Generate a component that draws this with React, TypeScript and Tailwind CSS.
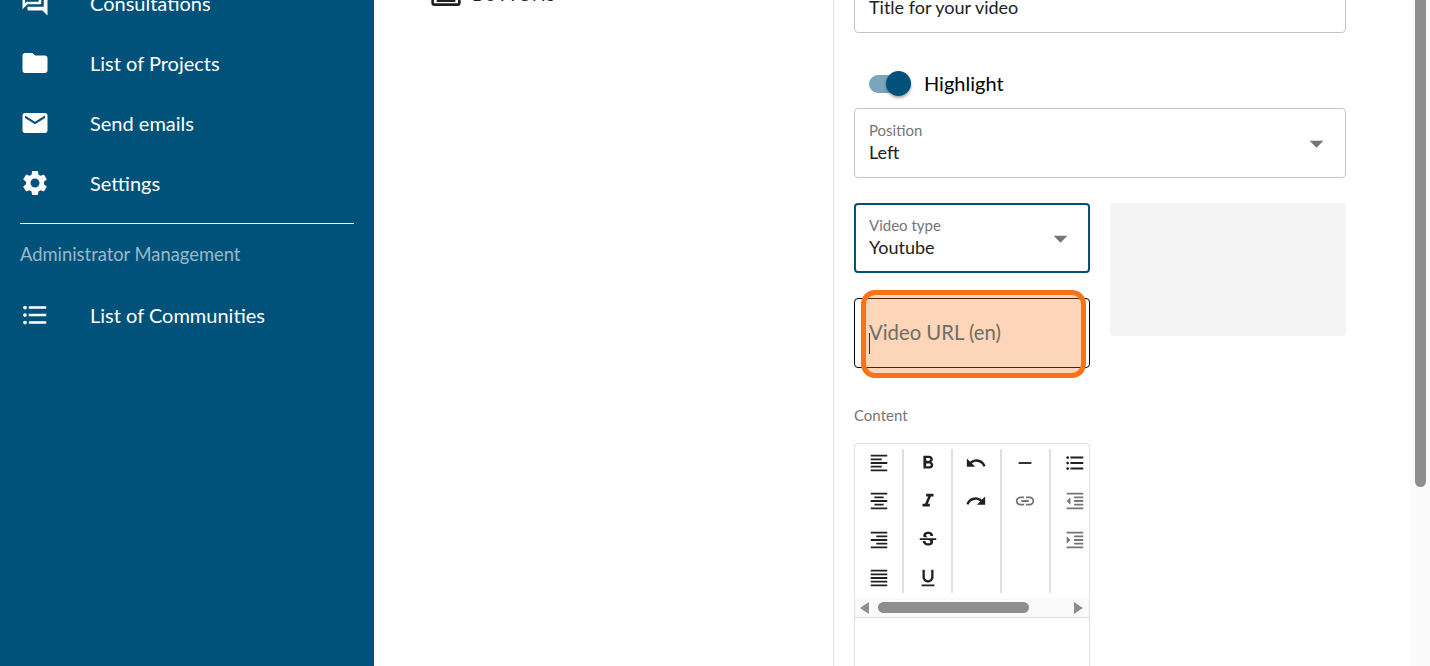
const ICONS = {
	forum: "M15 4v7H5.17L4 12.17V4h11m1-2H3c-.55 0-1 .45-1 1v14l4-4h10c.55 0 1-.45 1-1V3c0-.55-.45-1-1-1zm5 4h-2v9H6v2c0 .55.45 1 1 1h11l4 4V7c0-.55-.45-1-1-1z",
	folder: "M10 4H4c-1.1 0-1.99.9-1.99 2L2 18c0 1.1.9 2 2 2h16c1.1 0 2-.9 2-2V8c0-1.1-.9-2-2-2h-8l-2-2z",
	mail: "M20 4H4c-1.1 0-1.99.9-1.99 2L2 18c0 1.1.9 2 2 2h16c1.1 0 2-.9 2-2V6c0-1.1-.9-2-2-2zm0 4l-8 5-8-5V6l8 5 8-5v2z",
	settings: "M19.14 12.94c.04-.3.06-.61.06-.94 0-.32-.02-.64-.07-.94l2.03-1.58c.18-.14.23-.41.12-.61l-1.92-3.32c-.12-.22-.37-.29-.59-.22l-2.39.96c-.5-.38-1.03-.7-1.62-.94l-.36-2.54c-.04-.24-.24-.41-.48-.41h-3.84c-.24 0-.43.17-.47.41l-.36 2.54c-.59.24-1.13.57-1.62.94l-2.39-.96c-.22-.08-.47 0-.59.22L2.74 8.87c-.12.21-.08.47.12.61l2.03 1.58c-.05.3-.09.63-.09.94s.02.64.07.94l-2.03 1.58c-.18.14-.23.41-.12.61l1.92 3.32c.12.22.37.29.59.22l2.39-.96c.5.38 1.03.7 1.62.94l.36 2.54c.05.24.24.41.48.41h3.84c.24 0 .44-.17.47-.41l.36-2.54c.59-.24 1.13-.56 1.62-.94l2.39.96c.22.08.47 0 .59-.22l1.92-3.32c.12-.22.07-.47-.12-.61l-2.01-1.58zM12 15.6c-1.98 0-3.6-1.62-3.6-3.6s1.62-3.6 3.6-3.6 3.6 1.62 3.6 3.6-1.62 3.6-3.6 3.6z",
	list: "M4 10.5c-.83 0-1.5.67-1.5 1.5s.67 1.5 1.5 1.5 1.5-.67 1.5-1.5-.67-1.5-1.5-1.5zm0-6c-.83 0-1.5.67-1.5 1.5S3.17 7.5 4 7.5 5.5 6.83 5.5 6 4.83 4.5 4 4.5zm0 12c-.83 0-1.5.68-1.5 1.5s.68 1.5 1.5 1.5 1.5-.68 1.5-1.5-.67-1.5-1.5-1.5zM7 19h14v-2H7v2zm0-6h14v-2H7v2zm0-8v2h14V5H7z",
	button: "M21 3H3c-1.1 0-2 .9-2 2v14c0 1.1.9 2 2 2h18c1.1 0 2-.9 2-2V5c0-1.1-.9-2-2-2zm0 16H3V5h18v14zM5 15h14v3H5z",
	arrow: "M7 10l5 5 5-5z",
	alignLeft: "M15 15H3v2h12v-2zm0-8H3v2h12V7zM3 13h18v-2H3v2zm0 8h18v-2H3v2zM3 3v2h18V3H3z",
	alignCenter: "M7 15v2h10v-2H7zm-4 6h18v-2H3v2zm0-8h18v-2H3v2zm4-6v2h10V7H7zM3 3v2h18V3H3z",
	alignRight: "M3 21h18v-2H3v2zm6-4h12v-2H9v2zm-6-4h18v-2H3v2zm6-4h12V7H9v2zM3 3v2h18V3H3z",
	alignJustify: "M3 21h18v-2H3v2zm0-4h18v-2H3v2zm0-4h18v-2H3v2zm0-4h18V7H3v2zm0-6v2h18V3H3z",
	bold: "M15.6 10.79c.97-.67 1.65-1.77 1.65-2.79 0-2.26-1.75-4-4-4H7v14h7.04c2.09 0 3.71-1.7 3.71-3.79 0-1.52-.86-2.82-2.15-3.42zM10 6.5h3c.83 0 1.5.67 1.5 1.5s-.67 1.5-1.5 1.5h-3v-3zm3.5 9H10v-3h3.5c.83 0 1.5.67 1.5 1.5s-.67 1.5-1.5 1.5z",
	italic: "M10 4v3h2.21l-3.42 8H6v3h8v-3h-2.21l3.42-8H18V4z",
	strike: "M7.24 8.75c-.26-.48-.39-1.03-.39-1.67 0-.61.13-1.16.4-1.67.26-.5.63-.93 1.11-1.29.48-.35 1.05-.63 1.7-.83.66-.19 1.39-.29 2.18-.29.81 0 1.54.11 2.21.34.66.22 1.23.54 1.69.94.47.4.83.88 1.08 1.43.25.55.38 1.15.38 1.81h-3.01c0-.31-.05-.59-.15-.85-.09-.27-.24-.49-.44-.68-.2-.19-.45-.33-.75-.44-.3-.1-.66-.16-1.06-.16-.39 0-.74.04-1.03.13-.29.09-.53.21-.72.36-.19.16-.34.34-.44.55-.1.21-.15.43-.15.66 0 .48.25.88.74 1.21.38.25.77.48 1.41.7H7.39c-.05-.08-.11-.17-.15-.25zM21 12v-2H3v2h9.62c.18.07.4.14.55.2.37.17.66.34.87.51.21.17.35.36.43.57.07.2.11.43.11.69 0 .23-.05.45-.14.66-.09.2-.23.38-.42.53-.19.15-.42.26-.71.35-.29.08-.63.13-1.01.13-.43 0-.83-.04-1.18-.13s-.66-.23-.91-.42c-.25-.19-.45-.44-.59-.75-.14-.31-.25-.76-.25-1.21H6.4c0 .55.08 1.13.24 1.58.16.45.37.85.65 1.21.28.35.6.66.98.92.37.26.78.48 1.22.65.44.17.9.3 1.38.39.48.08.96.13 1.44.13.8 0 1.53-.09 2.18-.28s1.21-.45 1.67-.79c.46-.34.82-.77 1.07-1.27s.38-1.07.38-1.71c0-.6-.1-1.14-.31-1.61-.05-.11-.11-.23-.17-.33H21z",
	underline: "M12 17c3.31 0 6-2.69 6-6V3h-2.5v8c0 1.93-1.57 3.5-3.5 3.5S8.5 12.93 8.5 11V3H6v8c0 3.31 2.69 6 6 6zm-7 2v2h14v-2H5z",
	undo: "M12.5 8c-2.65 0-5.05.99-6.9 2.6L2 7v9h9l-3.62-3.62c1.39-1.16 3.16-1.88 5.12-1.88 3.54 0 6.55 2.31 7.6 5.5l2.37-.78C21.08 11.03 17.15 8 12.5 8z",
	redo: "M18.4 10.6C16.55 8.99 14.15 8 11.5 8c-4.65 0-8.58 3.03-9.96 7.22L3.9 16c1.05-3.19 4.05-5.5 7.6-5.5 1.95 0 3.73.72 5.12 1.88L13 16h9V7l-3.6 3.6z",
	rule: "M19 13H5v-2h14v2z",
	link: "M3.9 12c0-1.71 1.39-3.1 3.1-3.1h4V7H7c-2.76 0-5 2.24-5 5s2.24 5 5 5h4v-1.9H7c-1.71 0-3.1-1.39-3.1-3.1zM8 13h8v-2H8v2zm9-6h-4v1.9h4c1.71 0 3.1 1.39 3.1 3.1s-1.39 3.1-3.1 3.1h-4V17h4c2.76 0 5-2.24 5-5s-2.24-5-5-5z",
	outdent: "M11 17h10v-2H11v2zm-8-5l4 4V8l-4 4zm0 9h18v-2H3v2zM3 3v2h18V3H3zm8 6h10V7H11v2zm0 4h10v-2H11v2z",
	indent: "M3 21h18v-2H3v2zM3 8v8l4-4-4-4zm8 9h10v-2H11v2zM3 3v2h18V3H3zm8 6h10V7H11v2zm0 4h10v-2H11v2z",
};

const NAV = [
	{ icon: ICONS.forum, label: "Consultations" },
	{ icon: ICONS.folder, label: "List of Projects" },
	{ icon: ICONS.mail, label: "Send emails" },
	{ icon: ICONS.settings, label: "Settings" },
];

const TOOLBAR = [
	[
		{ d: ICONS.alignLeft },
		{ d: ICONS.alignCenter },
		{ d: ICONS.alignRight },
		{ d: ICONS.alignJustify },
	],
	[{ d: ICONS.bold }, { d: ICONS.italic }, { d: ICONS.strike }, { d: ICONS.underline }],
	[{ d: ICONS.undo }, { d: ICONS.redo }],
	[{ d: ICONS.rule }, { d: ICONS.link, muted: true }],
	[{ d: ICONS.list }, { d: ICONS.outdent, muted: true }, { d: ICONS.indent, muted: true }],
];

function Icon({ d, className }: { d: string; className: string }) {
	return (
		<svg viewBox="0 0 24 24" fill="currentColor" className={className}>
			<path d={d} />
		</svg>
	);
}

function NavRow({ icon, label }: { icon: string; label: string }) {
	return (
		<div className="flex h-[60px] items-center pl-5">
			<Icon d={icon} className="h-[30px] w-[30px] shrink-0" />
			<span className="ml-10 text-[20px]">{label}</span>
		</div>
	);
}

function SelectField({ label, value, focused }: { label: string; value: string; focused?: boolean }) {
	return (
		<div
			className={
				focused
					? "flex h-[70px] items-center justify-between rounded border-2 border-[#00527a] pl-[13px] pr-[11px]"
					: "flex h-[70px] items-center justify-between rounded border border-[#c4c4c4] pl-[14px] pr-[12px]"
			}
		>
			<div className="pb-[2px]">
				<div className="text-[15px] leading-[20px] text-[#757575]">{label}</div>
				<div className="text-[18px] leading-[24px] text-[#212121]">{value}</div>
			</div>
			<Icon d={ICONS.arrow} className="h-[33px] w-[33px] text-[#757575]" />
		</div>
	);
}

function Toolbar() {
	return (
		<div className="mt-[18px] h-[300px] rounded-t border border-[#e0e0e0]">
			<div className="flex overflow-hidden py-[5px] pl-[0.5px]">
				{TOOLBAR.map((column, i) => (
					<div
						key={i}
						className={
							i < 4
								? "flex h-[144px] w-[48.75px] shrink-0 flex-col items-center gap-[16.3px] border-r-2 border-[#e0e0e0] pt-[3px] text-[#212121]"
								: "flex h-[144px] w-[48.75px] shrink-0 flex-col items-center gap-[16.3px] pt-[3px] text-[#212121]"
						}
					>
						{column.map((item, j) => (
							<Icon
								key={j}
								d={item.d}
								className={item.muted ? "h-[22px] w-[22px] shrink-0 text-[#757575]" : "h-[22px] w-[22px] shrink-0"}
							/>
						))}
					</div>
				))}
			</div>
			<div className="flex h-[20px] items-center border-b border-[#e0e0e0] bg-[#fafafa] pl-[5px]">
				<svg viewBox="0 0 9 12" className="h-3 w-[9px] fill-[#8e8e8e]">
					<path d="M9 0v12L0 6z" />
				</svg>
				<div className="ml-[9px] h-[11px] w-[151px] rounded-full bg-[#8e8e8e]" />
				<svg viewBox="0 0 9 12" className="ml-[45px] h-3 w-[9px] fill-[#8e8e8e]">
					<path d="M0 0v12l9-6z" />
				</svg>
			</div>
		</div>
	);
}

export default function App() {
	return (
		<div className="flex h-[666px] overflow-hidden bg-white text-black [font-family:Lato,sans-serif]">
			{/* Sidebar */}
			<aside className="w-[374px] shrink-0 overflow-hidden bg-[#00527a] text-white">
				<div className="-mt-[27px]">
					{NAV.map((item) => (
						<NavRow key={item.label} icon={item.icon} label={item.label} />
					))}
				</div>
				<div className="mx-5 mt-[10px] border-t border-white" />
				<div className="mx-5 mt-[15px] text-[18.35px] leading-[30px] text-white/60">Administrator Management</div>
				<div className="mt-4">
					<NavRow icon={ICONS.list} label="List of Communities" />
				</div>
			</aside>

			{/* Component picker */}
			<section className="w-[460px] shrink-0 border-r border-[#e0e0e0] pl-[56px]">
				<div className="-mt-[22px] flex h-8 items-center gap-[10px] text-[#212121]">
					<Icon d={ICONS.button} className="h-8 w-8" />
					<span className="pb-[1px] text-[18px] leading-8">BUTTONS</span>
				</div>
			</section>

			{/* Form */}
			<section className="ml-5 w-[492px] shrink-0">
				<div className="-mt-[38px] flex h-[71px] items-end rounded border border-[#c4c4c4] pb-[13px] pl-[14px] text-[18px] leading-[24px] text-[#212121]">
					Title for your video
				</div>

				<div className="mt-[27px] flex h-12 items-center pl-[15px]">
					<div className="relative h-[18px] w-[36px] rounded-full bg-[#7aa5bc]">
						<div className="absolute -top-[4px] left-[17px] h-[25px] w-[25px] rounded-full bg-[#00527a] shadow-[0_2px_3px_rgba(0,0,0,0.35)]" />
					</div>
					<span className="ml-[19px] pb-[2px] text-[20px]">Highlight</span>
				</div>

				<SelectField label="Position" value="Left" />

				<div className="mt-[25px] grid grid-cols-2 gap-x-5">
					<div>
						<SelectField label="Video type" value="Youtube" focused />
						<div className="relative mt-[25px] flex h-[70px] items-center rounded border border-black pl-[14px]">
							<span className="relative z-10 pb-[1px] text-[20.3px] text-[#6e6e66]">Video URL (en)</span>
							<div className="absolute left-[14px] top-[34px] h-[21px] w-px bg-black" />
							<div className="absolute -bottom-[11px] -top-[9px] left-[6px] right-[3px] rounded-[14px] border-[5px] border-[#f97316] bg-[#f97316]/30" />
						</div>
						<div className="mt-[37px] text-[15px] leading-5 text-[#757575]">Content</div>
						<Toolbar />
					</div>
					<div className="h-[133px] rounded bg-[#f4f4f4]" />
				</div>
			</section>

			{/* Page scrollbar */}
			<div className="ml-auto w-[19px] shrink-0 bg-[#fafafa] pl-1">
				<div className="h-[487px] w-[11px] rounded-b-full bg-[#8e8e8e]" />
			</div>
		</div>
	);
}
